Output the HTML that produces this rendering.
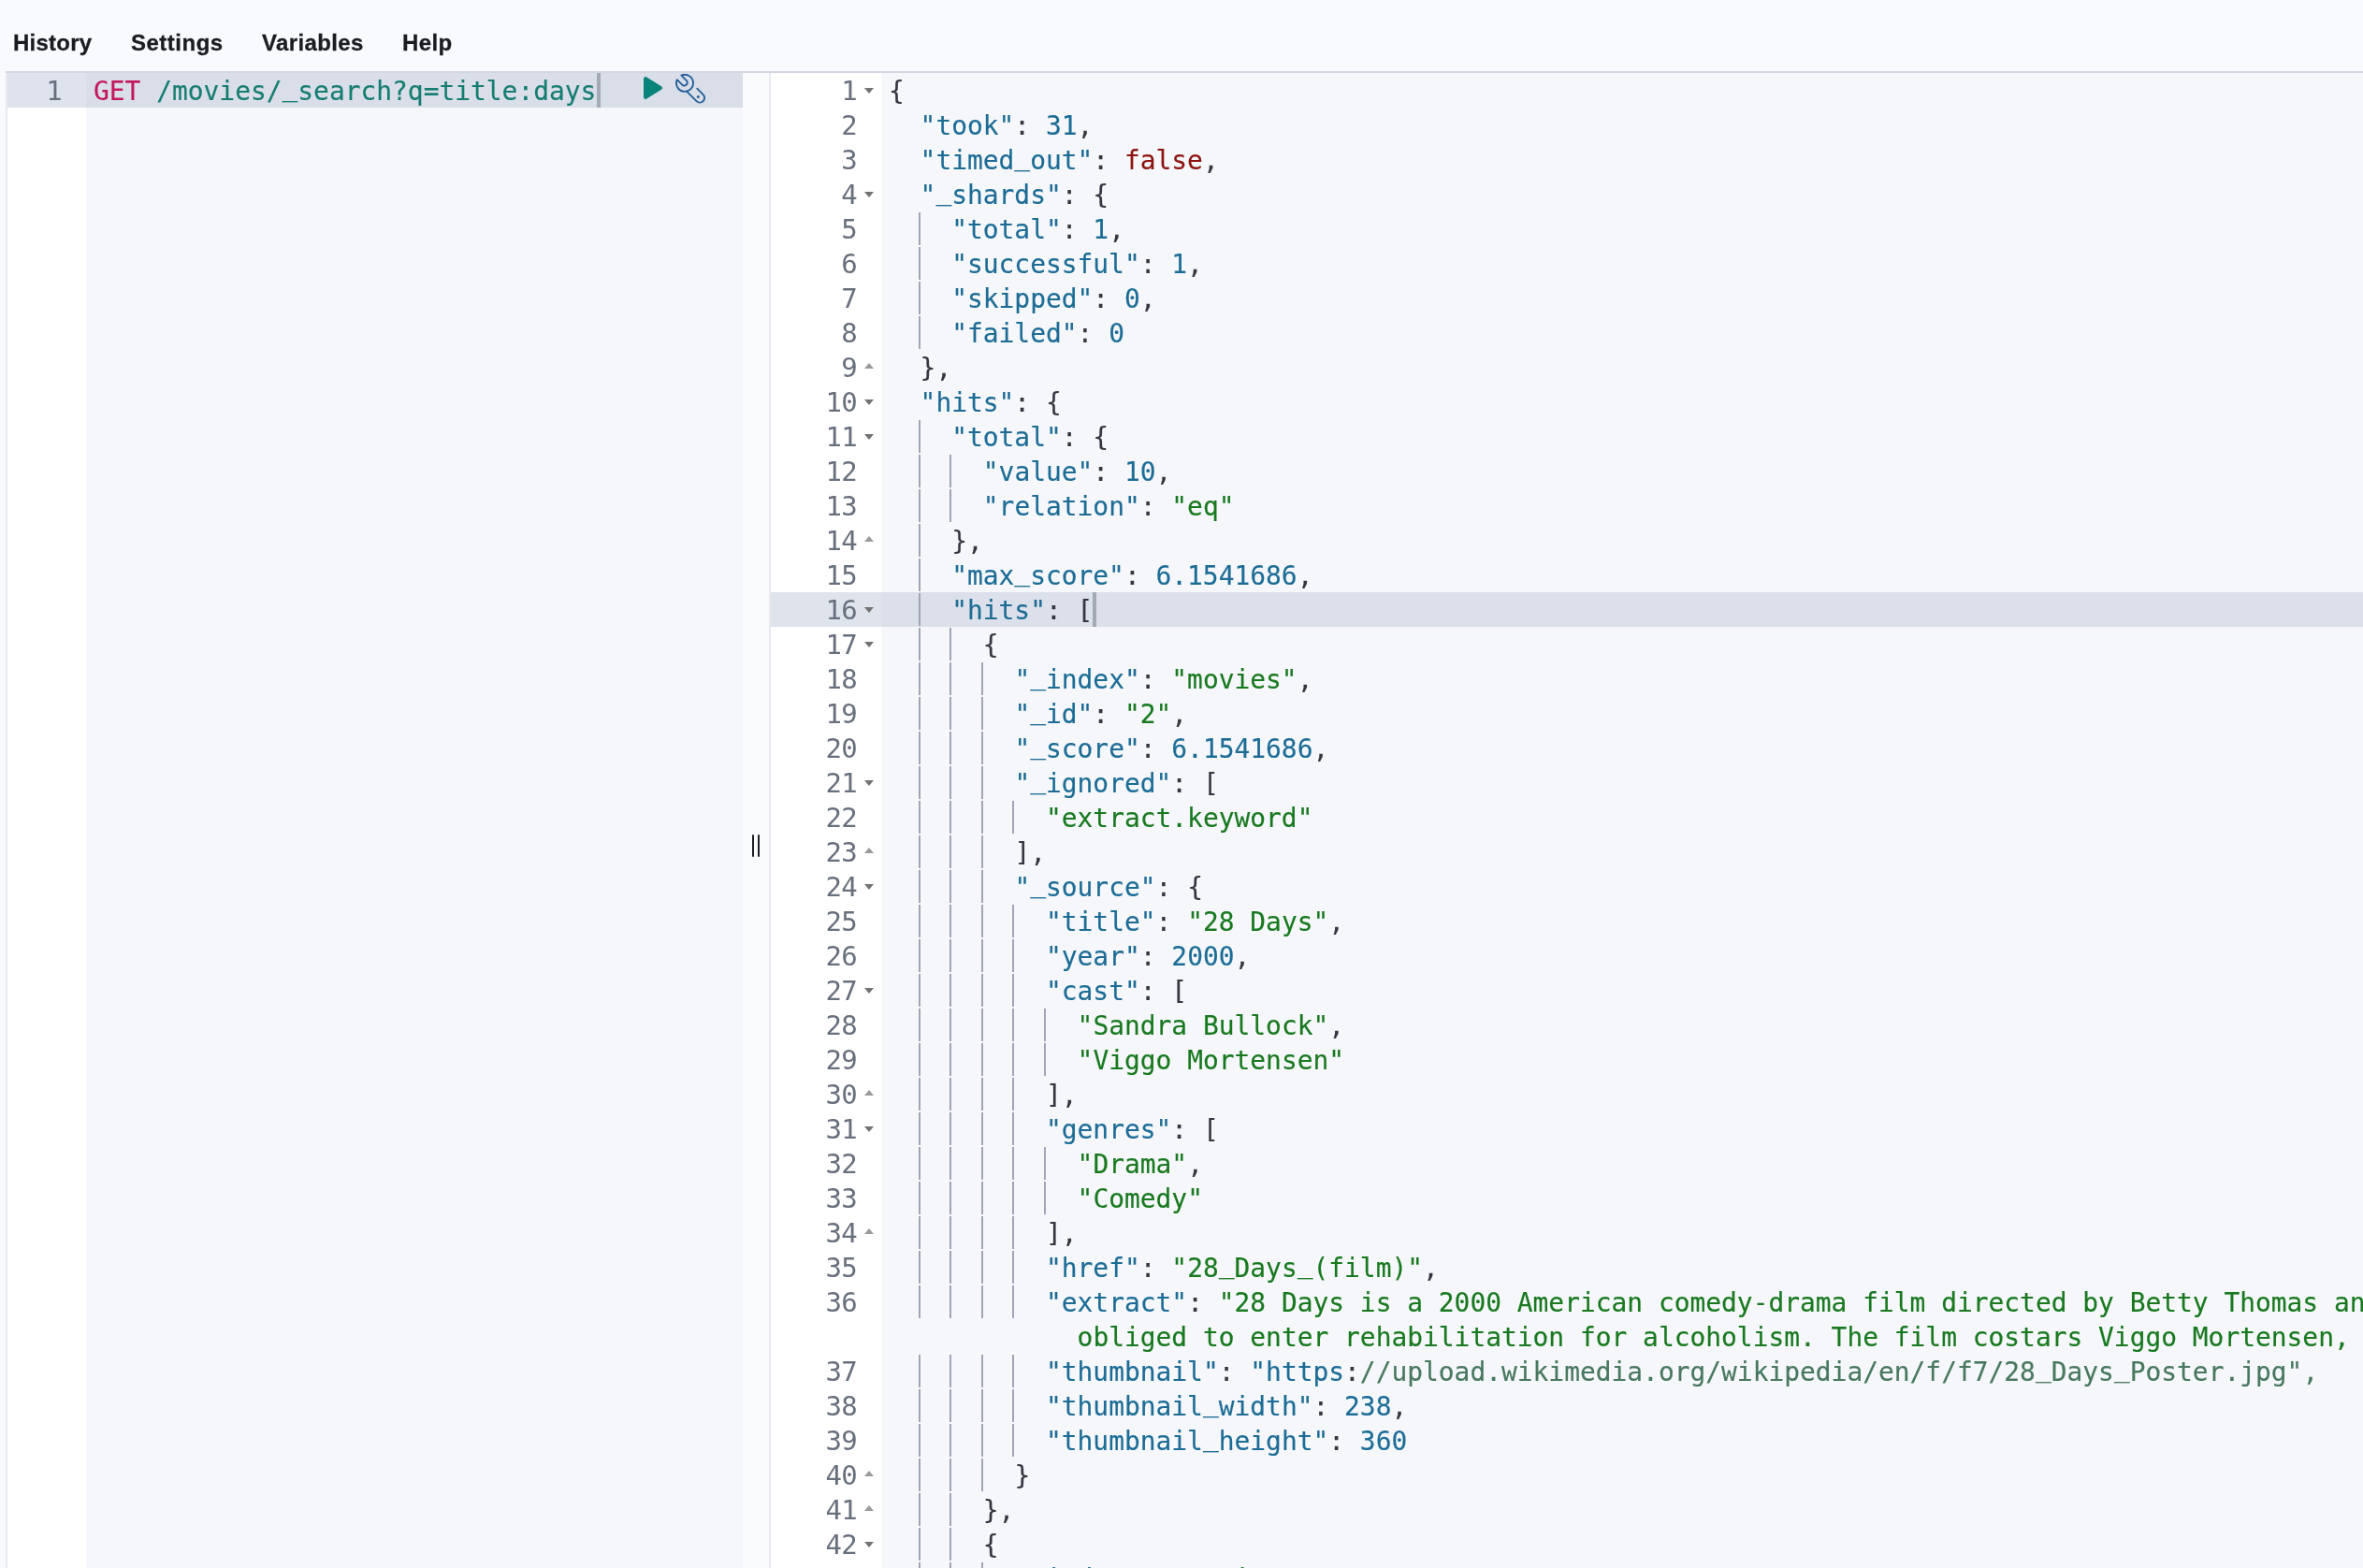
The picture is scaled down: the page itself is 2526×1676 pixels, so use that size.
<!DOCTYPE html>
<html lang="en"><head><meta charset="utf-8"><title>Console - Dev Tools - Elastic</title>
<style>
*{box-sizing:border-box;margin:0;padding:0}
html,body{width:2526px;height:1676px;overflow:hidden;background:#F9FAFD}
body{position:relative;font-family:"Liberation Sans",sans-serif}
.abs{position:absolute}
.menu{will-change:transform;position:absolute;top:30px;height:32px;line-height:32px;font:bold 24px/32px "Liberation Sans",sans-serif;color:#1A1C21;white-space:nowrap;-webkit-text-stroke:0.3px #1A1C21}
.topline{position:absolute;left:6px;top:76px;width:2520px;height:2px;background:#D3D7E2}
.ed{will-change:transform;position:absolute;top:78px;height:1598px;overflow:hidden;background:#F5F7FA;border-left:2px solid #E8EAF0}
.gut{position:absolute;top:0;left:0;height:100%;background:#FFFFFF}
.row{position:absolute;left:0;height:37px;width:100%}
.code{font-family:"DejaVu Sans Mono", "Liberation Mono", monospace;font-size:27.9px;line-height:37px;white-space:pre;font-kerning:none;font-variant-ligatures:none;-webkit-text-stroke:0.15px currentColor}
.num{position:absolute;text-align:right;color:#69707D;font-size:29px;letter-spacing:-0.66px;-webkit-text-stroke:0}
.txt{position:absolute;color:#343741}
.v{color:#1C6C96}.s{color:#18791F}.n{color:#1C6C96}.b{color:#8C1410}.p{color:#343741}.c{color:#48785F}
.m{color:#C4155F}.u{color:#157D70}
.g{position:absolute;width:2px;height:35px;background:#A0A5B5}
.fd{position:absolute;width:0;height:0;border-left:5px solid transparent;border-right:5px solid transparent;border-top:6.5px solid #737373}
.fu{position:absolute;width:0;height:0;border-left:5px solid transparent;border-right:5px solid transparent;border-bottom:6.5px solid #9A9A9A}
.cur{position:absolute;background:#A4A9B6}
.us{position:relative;top:-5px}
</style></head><body>
<div class="menu" style="left:14.0px;letter-spacing:0.25px">History</div>
<div class="menu" style="left:139.9px;letter-spacing:0.5px">Settings</div>
<div class="menu" style="left:280.4px;letter-spacing:0.37px">Variables</div>
<div class="menu" style="left:430.0px;letter-spacing:0.35px">Help</div>
<div class="topline"></div>
<div class="ed" style="left:6px;width:788px">
<div class="gut" style="left:0;width:84px"></div>
<div class="row" style="top:0;background:#D9DEE9"></div>
<div class="abs" style="left:0;top:0;width:84px;height:37px;background:#DEE3EE"></div>
<div class="num code" style="left:0;top:1px;width:58px;height:37px">1</div>
<div class="txt code" style="left:92px;top:1px"><span class="m">GET</span> <span class="u">/movies/<span class="us">_</span>search?q=title:days</span></div>
<div class="cur" style="left:630px;top:0;width:4px;height:37px"></div>
<svg class="abs" style="left:674px;top:0" width="40" height="37" viewBox="682 78 40 37"><path d="M690.2 84.3 L690.2 103.7 L705.8 94 Z" fill="#08837A" stroke="#08837A" stroke-width="4.4" stroke-linejoin="round"/></svg>
<svg class="abs" style="left:714px;top:1px" width="32" height="32" viewBox="0 0 32 32" fill="none" stroke="#25609A" stroke-width="1.9" stroke-linecap="round" stroke-linejoin="round"><path d="M6.4 1.6 L12.1 7.3 A3.3 3.3 0 0 1 7.5 11.9 L1.8 6.2 A9 9 0 1 0 6.4 1.6 Z"/><path d="M23.3 15.7 L29.64 22.06 A5 5 0 0 1 22.56 29.14 L12 18.6"/><circle cx="24.3" cy="24.5" r="1.5" fill="#25609A" stroke="none"/></svg>
</div>
<div class="abs" style="left:794px;top:78px;width:28px;height:1598px;background:#FAFBFD"></div>
<div class="abs" style="left:804px;top:892px;width:2px;height:24px;background:#1F2128;border-radius:1px"></div>
<div class="abs" style="left:810px;top:892px;width:2px;height:24px;background:#1F2128;border-radius:1px"></div>
<div class="ed" style="left:822px;width:1704px">
<div class="gut" style="left:0;width:118px"></div>
<div class="num code" style="left:0;top:1px;width:92px;height:37px">1</div>
<div class="fd" style="left:100px;top:15.5px"></div>
<div class="txt code" style="left:126.0px;top:1px"><span class="p">{</span></div>
<div class="num code" style="left:0;top:38px;width:92px;height:37px">2</div>
<div class="txt code" style="left:159.6px;top:38px"><span class="v">"took"</span><span class="p">:</span> <span class="n">31</span><span class="p">,</span></div>
<div class="num code" style="left:0;top:75px;width:92px;height:37px">3</div>
<div class="txt code" style="left:159.6px;top:75px"><span class="v">"timed<span class="us">_</span>out"</span><span class="p">:</span> <span class="b">false</span><span class="p">,</span></div>
<div class="num code" style="left:0;top:112px;width:92px;height:37px">4</div>
<div class="fd" style="left:100px;top:126.5px"></div>
<div class="txt code" style="left:159.6px;top:112px"><span class="v">"<span class="us">_</span>shards"</span><span class="p">:</span> <span class="p">{</span></div>
<div class="num code" style="left:0;top:149px;width:92px;height:37px">5</div>
<div class="g" style="left:157.6px;top:149px"></div>
<div class="txt code" style="left:193.2px;top:149px"><span class="v">"total"</span><span class="p">:</span> <span class="n">1</span><span class="p">,</span></div>
<div class="num code" style="left:0;top:186px;width:92px;height:37px">6</div>
<div class="g" style="left:157.6px;top:186px"></div>
<div class="txt code" style="left:193.2px;top:186px"><span class="v">"successful"</span><span class="p">:</span> <span class="n">1</span><span class="p">,</span></div>
<div class="num code" style="left:0;top:223px;width:92px;height:37px">7</div>
<div class="g" style="left:157.6px;top:223px"></div>
<div class="txt code" style="left:193.2px;top:223px"><span class="v">"skipped"</span><span class="p">:</span> <span class="n">0</span><span class="p">,</span></div>
<div class="num code" style="left:0;top:260px;width:92px;height:37px">8</div>
<div class="g" style="left:157.6px;top:260px"></div>
<div class="txt code" style="left:193.2px;top:260px"><span class="v">"failed"</span><span class="p">:</span> <span class="n">0</span></div>
<div class="num code" style="left:0;top:297px;width:92px;height:37px">9</div>
<div class="fu" style="left:100px;top:310px"></div>
<div class="txt code" style="left:159.6px;top:297px"><span class="p">},</span></div>
<div class="num code" style="left:0;top:334px;width:92px;height:37px">10</div>
<div class="fd" style="left:100px;top:348.5px"></div>
<div class="txt code" style="left:159.6px;top:334px"><span class="v">"hits"</span><span class="p">:</span> <span class="p">{</span></div>
<div class="num code" style="left:0;top:371px;width:92px;height:37px">11</div>
<div class="fd" style="left:100px;top:385.5px"></div>
<div class="g" style="left:157.6px;top:371px"></div>
<div class="txt code" style="left:193.2px;top:371px"><span class="v">"total"</span><span class="p">:</span> <span class="p">{</span></div>
<div class="num code" style="left:0;top:408px;width:92px;height:37px">12</div>
<div class="g" style="left:157.6px;top:408px"></div>
<div class="g" style="left:191.2px;top:408px"></div>
<div class="txt code" style="left:226.8px;top:408px"><span class="v">"value"</span><span class="p">:</span> <span class="n">10</span><span class="p">,</span></div>
<div class="num code" style="left:0;top:445px;width:92px;height:37px">13</div>
<div class="g" style="left:157.6px;top:445px"></div>
<div class="g" style="left:191.2px;top:445px"></div>
<div class="txt code" style="left:226.8px;top:445px"><span class="v">"relation"</span><span class="p">:</span> <span class="s">"eq"</span></div>
<div class="num code" style="left:0;top:482px;width:92px;height:37px">14</div>
<div class="fu" style="left:100px;top:495px"></div>
<div class="g" style="left:157.6px;top:482px"></div>
<div class="txt code" style="left:193.2px;top:482px"><span class="p">},</span></div>
<div class="num code" style="left:0;top:519px;width:92px;height:37px">15</div>
<div class="g" style="left:157.6px;top:519px"></div>
<div class="txt code" style="left:193.2px;top:519px"><span class="v">"max<span class="us">_</span>score"</span><span class="p">:</span> <span class="n">6.1541686</span><span class="p">,</span></div>
<div class="row" style="top:555px;background:#DCE0EA"></div>
<div class="abs" style="left:0;top:555px;width:118px;height:37px;background:#DFE3EC"></div>
<div class="num code" style="left:0;top:556px;width:92px;height:37px">16</div>
<div class="fd" style="left:100px;top:570.5px"></div>
<div class="g" style="left:157.6px;top:556px"></div>
<div class="txt code" style="left:193.2px;top:556px"><span class="v">"hits"</span><span class="p">:</span> <span class="p">[</span></div>
<div class="cur" style="left:344.4px;top:555px;width:4px;height:37px"></div>
<div class="num code" style="left:0;top:593px;width:92px;height:37px">17</div>
<div class="fd" style="left:100px;top:607.5px"></div>
<div class="g" style="left:157.6px;top:593px"></div>
<div class="g" style="left:191.2px;top:593px"></div>
<div class="txt code" style="left:226.8px;top:593px"><span class="p">{</span></div>
<div class="num code" style="left:0;top:630px;width:92px;height:37px">18</div>
<div class="g" style="left:157.6px;top:630px"></div>
<div class="g" style="left:191.2px;top:630px"></div>
<div class="g" style="left:224.8px;top:630px"></div>
<div class="txt code" style="left:260.4px;top:630px"><span class="v">"<span class="us">_</span>index"</span><span class="p">:</span> <span class="s">"movies"</span><span class="p">,</span></div>
<div class="num code" style="left:0;top:667px;width:92px;height:37px">19</div>
<div class="g" style="left:157.6px;top:667px"></div>
<div class="g" style="left:191.2px;top:667px"></div>
<div class="g" style="left:224.8px;top:667px"></div>
<div class="txt code" style="left:260.4px;top:667px"><span class="v">"<span class="us">_</span>id"</span><span class="p">:</span> <span class="s">"2"</span><span class="p">,</span></div>
<div class="num code" style="left:0;top:704px;width:92px;height:37px">20</div>
<div class="g" style="left:157.6px;top:704px"></div>
<div class="g" style="left:191.2px;top:704px"></div>
<div class="g" style="left:224.8px;top:704px"></div>
<div class="txt code" style="left:260.4px;top:704px"><span class="v">"<span class="us">_</span>score"</span><span class="p">:</span> <span class="n">6.1541686</span><span class="p">,</span></div>
<div class="num code" style="left:0;top:741px;width:92px;height:37px">21</div>
<div class="fd" style="left:100px;top:755.5px"></div>
<div class="g" style="left:157.6px;top:741px"></div>
<div class="g" style="left:191.2px;top:741px"></div>
<div class="g" style="left:224.8px;top:741px"></div>
<div class="txt code" style="left:260.4px;top:741px"><span class="v">"<span class="us">_</span>ignored"</span><span class="p">:</span> <span class="p">[</span></div>
<div class="num code" style="left:0;top:778px;width:92px;height:37px">22</div>
<div class="g" style="left:157.6px;top:778px"></div>
<div class="g" style="left:191.2px;top:778px"></div>
<div class="g" style="left:224.8px;top:778px"></div>
<div class="g" style="left:258.4px;top:778px"></div>
<div class="txt code" style="left:294.0px;top:778px"><span class="s">"extract.keyword"</span></div>
<div class="num code" style="left:0;top:815px;width:92px;height:37px">23</div>
<div class="fu" style="left:100px;top:828px"></div>
<div class="g" style="left:157.6px;top:815px"></div>
<div class="g" style="left:191.2px;top:815px"></div>
<div class="g" style="left:224.8px;top:815px"></div>
<div class="txt code" style="left:260.4px;top:815px"><span class="p">],</span></div>
<div class="num code" style="left:0;top:852px;width:92px;height:37px">24</div>
<div class="fd" style="left:100px;top:866.5px"></div>
<div class="g" style="left:157.6px;top:852px"></div>
<div class="g" style="left:191.2px;top:852px"></div>
<div class="g" style="left:224.8px;top:852px"></div>
<div class="txt code" style="left:260.4px;top:852px"><span class="v">"<span class="us">_</span>source"</span><span class="p">:</span> <span class="p">{</span></div>
<div class="num code" style="left:0;top:889px;width:92px;height:37px">25</div>
<div class="g" style="left:157.6px;top:889px"></div>
<div class="g" style="left:191.2px;top:889px"></div>
<div class="g" style="left:224.8px;top:889px"></div>
<div class="g" style="left:258.4px;top:889px"></div>
<div class="txt code" style="left:294.0px;top:889px"><span class="v">"title"</span><span class="p">:</span> <span class="s">"28 Days"</span><span class="p">,</span></div>
<div class="num code" style="left:0;top:926px;width:92px;height:37px">26</div>
<div class="g" style="left:157.6px;top:926px"></div>
<div class="g" style="left:191.2px;top:926px"></div>
<div class="g" style="left:224.8px;top:926px"></div>
<div class="g" style="left:258.4px;top:926px"></div>
<div class="txt code" style="left:294.0px;top:926px"><span class="v">"year"</span><span class="p">:</span> <span class="n">2000</span><span class="p">,</span></div>
<div class="num code" style="left:0;top:963px;width:92px;height:37px">27</div>
<div class="fd" style="left:100px;top:977.5px"></div>
<div class="g" style="left:157.6px;top:963px"></div>
<div class="g" style="left:191.2px;top:963px"></div>
<div class="g" style="left:224.8px;top:963px"></div>
<div class="g" style="left:258.4px;top:963px"></div>
<div class="txt code" style="left:294.0px;top:963px"><span class="v">"cast"</span><span class="p">:</span> <span class="p">[</span></div>
<div class="num code" style="left:0;top:1000px;width:92px;height:37px">28</div>
<div class="g" style="left:157.6px;top:1000px"></div>
<div class="g" style="left:191.2px;top:1000px"></div>
<div class="g" style="left:224.8px;top:1000px"></div>
<div class="g" style="left:258.4px;top:1000px"></div>
<div class="g" style="left:292.0px;top:1000px"></div>
<div class="txt code" style="left:327.6px;top:1000px"><span class="s">"Sandra Bullock"</span><span class="p">,</span></div>
<div class="num code" style="left:0;top:1037px;width:92px;height:37px">29</div>
<div class="g" style="left:157.6px;top:1037px"></div>
<div class="g" style="left:191.2px;top:1037px"></div>
<div class="g" style="left:224.8px;top:1037px"></div>
<div class="g" style="left:258.4px;top:1037px"></div>
<div class="g" style="left:292.0px;top:1037px"></div>
<div class="txt code" style="left:327.6px;top:1037px"><span class="s">"Viggo Mortensen"</span></div>
<div class="num code" style="left:0;top:1074px;width:92px;height:37px">30</div>
<div class="fu" style="left:100px;top:1087px"></div>
<div class="g" style="left:157.6px;top:1074px"></div>
<div class="g" style="left:191.2px;top:1074px"></div>
<div class="g" style="left:224.8px;top:1074px"></div>
<div class="g" style="left:258.4px;top:1074px"></div>
<div class="txt code" style="left:294.0px;top:1074px"><span class="p">],</span></div>
<div class="num code" style="left:0;top:1111px;width:92px;height:37px">31</div>
<div class="fd" style="left:100px;top:1125.5px"></div>
<div class="g" style="left:157.6px;top:1111px"></div>
<div class="g" style="left:191.2px;top:1111px"></div>
<div class="g" style="left:224.8px;top:1111px"></div>
<div class="g" style="left:258.4px;top:1111px"></div>
<div class="txt code" style="left:294.0px;top:1111px"><span class="v">"genres"</span><span class="p">:</span> <span class="p">[</span></div>
<div class="num code" style="left:0;top:1148px;width:92px;height:37px">32</div>
<div class="g" style="left:157.6px;top:1148px"></div>
<div class="g" style="left:191.2px;top:1148px"></div>
<div class="g" style="left:224.8px;top:1148px"></div>
<div class="g" style="left:258.4px;top:1148px"></div>
<div class="g" style="left:292.0px;top:1148px"></div>
<div class="txt code" style="left:327.6px;top:1148px"><span class="s">"Drama"</span><span class="p">,</span></div>
<div class="num code" style="left:0;top:1185px;width:92px;height:37px">33</div>
<div class="g" style="left:157.6px;top:1185px"></div>
<div class="g" style="left:191.2px;top:1185px"></div>
<div class="g" style="left:224.8px;top:1185px"></div>
<div class="g" style="left:258.4px;top:1185px"></div>
<div class="g" style="left:292.0px;top:1185px"></div>
<div class="txt code" style="left:327.6px;top:1185px"><span class="s">"Comedy"</span></div>
<div class="num code" style="left:0;top:1222px;width:92px;height:37px">34</div>
<div class="fu" style="left:100px;top:1235px"></div>
<div class="g" style="left:157.6px;top:1222px"></div>
<div class="g" style="left:191.2px;top:1222px"></div>
<div class="g" style="left:224.8px;top:1222px"></div>
<div class="g" style="left:258.4px;top:1222px"></div>
<div class="txt code" style="left:294.0px;top:1222px"><span class="p">],</span></div>
<div class="num code" style="left:0;top:1259px;width:92px;height:37px">35</div>
<div class="g" style="left:157.6px;top:1259px"></div>
<div class="g" style="left:191.2px;top:1259px"></div>
<div class="g" style="left:224.8px;top:1259px"></div>
<div class="g" style="left:258.4px;top:1259px"></div>
<div class="txt code" style="left:294.0px;top:1259px"><span class="v">"href"</span><span class="p">:</span> <span class="s">"28<span class="us">_</span>Days<span class="us">_</span>(film)"</span><span class="p">,</span></div>
<div class="num code" style="left:0;top:1296px;width:92px;height:37px">36</div>
<div class="g" style="left:157.6px;top:1296px"></div>
<div class="g" style="left:191.2px;top:1296px"></div>
<div class="g" style="left:224.8px;top:1296px"></div>
<div class="g" style="left:258.4px;top:1296px"></div>
<div class="txt code" style="left:294.0px;top:1296px"><span class="v">"extract"</span><span class="p">:</span> <span class="s">"28 Days is a 2000 American comedy-drama film directed by Betty Thomas and written by Susannah Grant. Sandra Bullock stars as Gwen Cummings, a newspaper columnist </span></div>
<div class="txt code" style="left:327.6px;top:1333px"><span class="s">obliged to enter rehabilitation for alcoholism. The film costars Viggo Mortensen, Dominic West, Elizabeth Perkins, Azura Skye, Steve Buscemi, and Diane Ladd."</span><span class="p">,</span></div>
<div class="num code" style="left:0;top:1370px;width:92px;height:37px">37</div>
<div class="g" style="left:157.6px;top:1370px"></div>
<div class="g" style="left:191.2px;top:1370px"></div>
<div class="g" style="left:224.8px;top:1370px"></div>
<div class="g" style="left:258.4px;top:1370px"></div>
<div class="txt code" style="left:294.0px;top:1370px"><span class="v">"thumbnail"</span><span class="p">:</span> <span class="v">"https</span><span class="p">:</span><span class="c">//upload.wikimedia.org/wikipedia/en/f/f7/28<span class="us">_</span>Days<span class="us">_</span>Poster.jpg",</span></div>
<div class="num code" style="left:0;top:1407px;width:92px;height:37px">38</div>
<div class="g" style="left:157.6px;top:1407px"></div>
<div class="g" style="left:191.2px;top:1407px"></div>
<div class="g" style="left:224.8px;top:1407px"></div>
<div class="g" style="left:258.4px;top:1407px"></div>
<div class="txt code" style="left:294.0px;top:1407px"><span class="v">"thumbnail<span class="us">_</span>width"</span><span class="p">:</span> <span class="n">238</span><span class="p">,</span></div>
<div class="num code" style="left:0;top:1444px;width:92px;height:37px">39</div>
<div class="g" style="left:157.6px;top:1444px"></div>
<div class="g" style="left:191.2px;top:1444px"></div>
<div class="g" style="left:224.8px;top:1444px"></div>
<div class="g" style="left:258.4px;top:1444px"></div>
<div class="txt code" style="left:294.0px;top:1444px"><span class="v">"thumbnail<span class="us">_</span>height"</span><span class="p">:</span> <span class="n">360</span></div>
<div class="num code" style="left:0;top:1481px;width:92px;height:37px">40</div>
<div class="fu" style="left:100px;top:1494px"></div>
<div class="g" style="left:157.6px;top:1481px"></div>
<div class="g" style="left:191.2px;top:1481px"></div>
<div class="g" style="left:224.8px;top:1481px"></div>
<div class="txt code" style="left:260.4px;top:1481px"><span class="p">}</span></div>
<div class="num code" style="left:0;top:1518px;width:92px;height:37px">41</div>
<div class="fu" style="left:100px;top:1531px"></div>
<div class="g" style="left:157.6px;top:1518px"></div>
<div class="g" style="left:191.2px;top:1518px"></div>
<div class="txt code" style="left:226.8px;top:1518px"><span class="p">},</span></div>
<div class="num code" style="left:0;top:1555px;width:92px;height:37px">42</div>
<div class="fd" style="left:100px;top:1569.5px"></div>
<div class="g" style="left:157.6px;top:1555px"></div>
<div class="g" style="left:191.2px;top:1555px"></div>
<div class="txt code" style="left:226.8px;top:1555px"><span class="p">{</span></div>
<div class="num code" style="left:0;top:1592px;width:92px;height:37px">43</div>
<div class="g" style="left:157.6px;top:1592px"></div>
<div class="g" style="left:191.2px;top:1592px"></div>
<div class="g" style="left:224.8px;top:1592px"></div>
<div class="txt code" style="left:260.4px;top:1591px"><span class="v">"<span class="us">_</span>index"</span><span class="p">:</span> <span class="s">"movies"</span><span class="p">,</span></div>
</div>
</body></html>
